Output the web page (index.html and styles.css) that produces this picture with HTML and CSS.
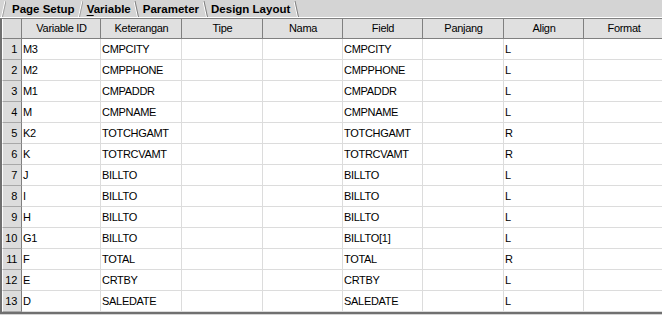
FILE: index.html
```html
<!DOCTYPE html>
<html lang="en">
<head>
    <meta charset="UTF-8">
    <meta name="viewport" content="width=device-width, initial-scale=1.0">
    <title>Variable</title>
    <link rel="stylesheet" href="styles.css">
</head>
<body>

    <div class="tabs">
        <svg class="sep" width="5" height="17" viewBox="0 0 5 17"><line x1="0.5" y1="17" x2="4" y2="1" stroke="#fff"/><line x1="1.5" y1="17" x2="5" y2="1" stroke="#a0a0a0"/></svg>
        <span class="tab first">Page Setup</span>
        <svg class="sep" width="5" height="17" viewBox="0 0 5 17"><line x1="0.5" y1="17" x2="4" y2="1" stroke="#fff"/><line x1="1.5" y1="17" x2="5" y2="1" stroke="#a0a0a0"/></svg>
        <span class="tab"><u>V</u>ariable</span>
        <svg class="sep" width="5" height="17" viewBox="0 0 5 17"><line x1="0" y1="1" x2="3.5" y2="17" stroke="#fff"/><line x1="1" y1="1" x2="4.5" y2="17" stroke="#808080"/></svg>
        <span class="tab">Parameter</span>
        <svg class="sep" width="5" height="17" viewBox="0 0 5 17"><line x1="0" y1="1" x2="3.5" y2="17" stroke="#fff"/><line x1="1" y1="1" x2="4.5" y2="17" stroke="#808080"/></svg>
        <span class="tab">Design Layout</span>
        <svg class="sep" width="5" height="17" viewBox="0 0 5 17"><line x1="0" y1="1" x2="3.5" y2="17" stroke="#fff"/><line x1="1" y1="1" x2="4.5" y2="17" stroke="#808080"/></svg>
    </div>

    <div class="grid">
        <div class="row head">
            <div class="ind"></div>
            <div class="cell">Variable ID</div>
            <div class="cell">Keterangan</div>
            <div class="cell">Tipe</div>
            <div class="cell">Nama</div>
            <div class="cell">Field</div>
            <div class="cell">Panjang</div>
            <div class="cell">Align</div>
            <div class="cell">Format</div>
        </div>
        <div id="rows"></div>
    </div>

    <script>
        // Variable rows: id, keterangan, field, align
        const data = [
            ['M3', 'CMPCITY', 'CMPCITY', 'L'],
            ['M2', 'CMPPHONE', 'CMPPHONE', 'L'],
            ['M1', 'CMPADDR', 'CMPADDR', 'L'],
            ['M', 'CMPNAME', 'CMPNAME', 'L'],
            ['K2', 'TOTCHGAMT', 'TOTCHGAMT', 'R'],
            ['K', 'TOTRCVAMT', 'TOTRCVAMT', 'R'],
            ['J', 'BILLTO', 'BILLTO', 'L'],
            ['I', 'BILLTO', 'BILLTO', 'L'],
            ['H', 'BILLTO', 'BILLTO', 'L'],
            ['G1', 'BILLTO', 'BILLTO[1]', 'L'],
            ['F', 'TOTAL', 'TOTAL', 'R'],
            ['E', 'CRTBY', 'CRTBY', 'L'],
            ['D', 'SALEDATE', 'SALEDATE', 'L']
        ];

        let html = '';
        data.forEach(function (r, i) {
            html += '<div class="row">' +
                '<div class="ind">' + (i + 1) + '</div>' +
                '<div class="cell">' + r[0] + '</div>' +
                '<div class="cell">' + r[1] + '</div>' +
                '<div class="cell"></div>' +
                '<div class="cell"></div>' +
                '<div class="cell">' + r[2] + '</div>' +
                '<div class="cell"></div>' +
                '<div class="cell">' + r[3] + '</div>' +
                '<div class="cell"></div>' +
                '</div>';
        });
        document.getElementById('rows').innerHTML = html;
    </script>

</body>
</html>
```

FILE: styles.css
```css
body {
    margin: 0;
    width: 662px;
    height: 315px;
    overflow: hidden;
    background-color: #d4d4d4;
    font-family: "Liberation Sans", Arial, sans-serif;
    font-size: 11px;
    color: #000;
}

.tabs {
    display: flex;
    align-items: stretch;
    height: 17px;
    padding-left: 1px;
    border-bottom: 1px solid #fff;
    background-color: #d4d4d4;
}

.sep {
    display: block;
    flex: none;
}

.tab {
    font-weight: bold;
    font-size: 11.5px;
    line-height: 18px;
    padding: 0 3.5px;
    white-space: nowrap;
}

.tab.first {
    padding-left: 6px;
}

.tab u {
    text-decoration-thickness: 1px;
    text-underline-offset: 2px;
}

.grid {
    overflow: hidden;
    border-top: 1px solid #808080;
    border-left: 2px solid #707070;
    border-bottom: 2px solid #707070;
    background-color: #fff;
}

.row {
    display: grid;
    grid-template-columns: 20px 79px 81px 81px 80px 80px 81px 80px 80px;
    height: 21px;
    letter-spacing: -0.3px;
}

.cell,
.ind {
    box-sizing: border-box;
    line-height: 20px;
    white-space: nowrap;
    overflow: hidden;
}

.cell {
    padding-left: 1px;
    border-right: 1px solid #dcdcdc;
    border-bottom: 1px solid #dcdcdc;
}

.ind {
    text-align: right;
    padding-right: 4px;
    background-color: #dcdcdc;
    border-left: 1px solid #fff;
    border-right: 1px solid #808080;
    border-bottom: 1px solid #a8a8a8;
}

.head {
    height: 20px;
}

.head .cell {
    text-align: center;
    line-height: 19px;
    background-color: #e0e0e0;
    border-right-color: #808080;
    border-bottom-color: #808080;
}

.head .ind {
    border-bottom-color: #808080;
}
```
